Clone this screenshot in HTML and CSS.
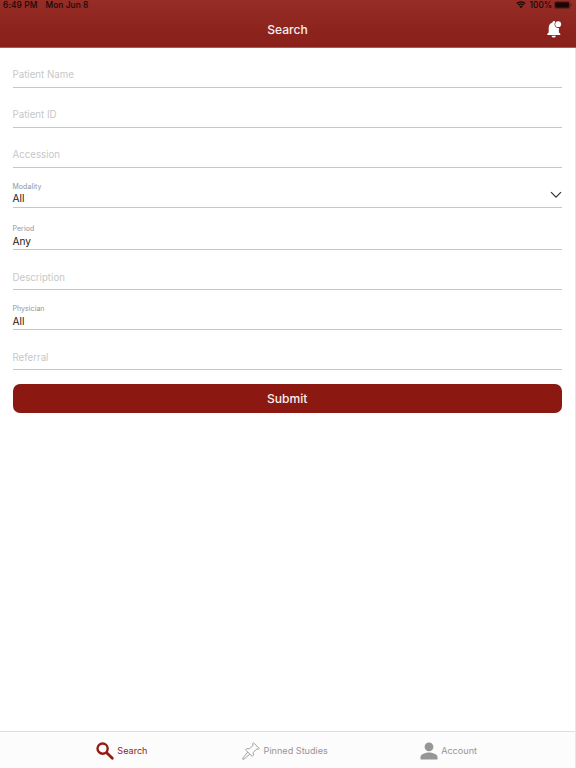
FILE: index.html
```html
<!DOCTYPE html>
<html lang="en">
<head>
<meta charset="utf-8">
<title>Search</title>
<link rel="stylesheet" href="styles.css">
</head>
<body>
<div class="app">
  <header class="header">
    <div class="status">
      <span class="time">6:49 PM</span>
      <span class="date">Mon Jun 8</span>
      <svg class="wifi" viewBox="0 0 20 15"><path d="M1.5 5.2a12 12 0 0 1 17 0M4.7 8.6a7.5 7.5 0 0 1 10.6 0" fill="none" stroke="currentColor" stroke-width="2.7"/><path d="M10 14.5 6.8 11.2a4.5 4.5 0 0 1 6.4 0z" fill="currentColor"/></svg>
      <span class="percent">100%</span>
      <svg class="battery" viewBox="0 0 18 8"><rect x=".3" y=".5" width="15.6" height="7" rx="1.7" fill="none" stroke="currentColor" stroke-width=".6" opacity=".5"/><rect x="1.1" y="1.2" width="14" height="5.6" rx="1" fill="currentColor"/><path d="M16.7 2.8q1 .3 1 1.2t-1 1.2z" fill="currentColor" opacity=".6"/></svg>
    </div>
    <div class="titlebar">
      <h1>Search</h1>
      <svg class="bell" viewBox="0 0 16 18"><path d="M1.3 14v-1.2l1.4-1.3V7.2C2.7 4 4.3 2.2 6.5 1.6V1q.5-1 1.5-1t1.3 1a3.7 3.7 0 0 0 3.6 6v4.5l1.4 1.3V14z" fill="#fff"/><circle cx="12.2" cy="3.2" r="2.9" fill="#fff"/><path d="M5.5 14.7h4.4q-.3 1.9-2.2 1.9t-2.2-1.9z" fill="#fff"/></svg>
    </div>
  </header>

  <main class="form">
    <div class="field"><span class="placeholder">Patient Name</span></div>
    <div class="field"><span class="placeholder">Patient ID</span></div>
    <div class="field"><span class="placeholder">Accession</span></div>
    <div class="field">
      <span class="label">Modality</span>
      <div class="row"><span class="value">All</span><svg class="chevron" viewBox="0 0 12 8"><path d="m1 1.2 5 5 5-5" fill="none" stroke="currentColor" stroke-width="1.2"/></svg></div>
    </div>
    <div class="field tall"><span class="label">Period</span><span class="value">Any</span></div>
    <div class="field"><span class="placeholder">Description</span></div>
    <div class="field"><span class="label">Physician</span><span class="value">All</span></div>
    <div class="field"><span class="placeholder">Referral</span></div>
    <button class="submit">Submit</button>
  </main>

  <nav class="tabs">
    <a class="tab search"><svg class="icon" viewBox="0 0 18 18"><circle cx="6.6" cy="6.6" r="5.1" fill="none" stroke="currentColor" stroke-width="2.4"/><path d="m10.7 10.7 5.6 5.5" stroke="currentColor" stroke-width="2.8" stroke-linecap="round"/></svg><span>Search</span></a>
    <a class="tab pinned"><svg class="icon" viewBox="0 0 18 18"><path d="m11.5.8 5.7 5.6-.9.9-1.6-.3-3.4 3.5.1 2.7-1.2 1.2-6.6-6.5 1.2-1.3 2.8.1 3.5-3.4-.4-1.6zM5.8 10 1 15.9l-.3 1.4 1.4-.3 5.7-4.8" fill="none" stroke="currentColor" stroke-width=".9" stroke-linejoin="round"/></svg><span>Pinned Studies</span></a>
    <a class="tab account"><svg class="icon" viewBox="0 0 18 18"><circle cx="9" cy="4.8" r="4.4" fill="currentColor"/><path d="M.5 17.5v-2.3c0-3 5.5-4.6 8.5-4.6s8.5 1.6 8.5 4.6v2.3z" fill="currentColor"/></svg><span>Account</span></a>
  </nav>
</div>
</body>
</html>
```
FILE: styles.css
```css
* { box-sizing: border-box; }
body {
  margin: 0;
  background: #fff;
  font-family: Inter, "Liberation Sans", sans-serif;
}
.app {
  display: flex;
  flex-direction: column;
  width: 576px;
  height: 768px;
  border-right: 1px solid #e5e5e5;
}
.header {
  height: 48px;
  margin-right: -1px;
  background: linear-gradient(#962d27, #8b231c 70%, #8a211b);
  border-bottom: 1px solid #a95a55;
}
.status {
  display: flex;
  align-items: center;
  height: 10px;
  padding: 0 4px 0 3px;
  color: #180706;
  font-size: 8.4px;
  font-weight: 500;
  line-height: 10px;
  white-space: nowrap;
}
.time { width: 42.5px; letter-spacing: .1px; }
.date { letter-spacing: .05px; }
.wifi { width: 10px; height: 7.5px; margin-left: auto; }
.percent { width: 22.5px; margin: 0 2px 0 3.5px; }
.battery { width: 18px; height: 8px; }
.titlebar {
  display: grid;
  grid-template-columns: 1fr auto 1fr;
  align-items: center;
  height: 38px;
  padding: 1px 14px 0 13px;
}
h1 {
  grid-column: 2;
  margin: 0;
  color: #f8eeed;
  font-size: 12.1px;
  font-weight: 500;
  line-height: 18px;
}
.bell { width: 16px; height: 18px; justify-self: end; }
.form {
  display: flex;
  flex: 1;
  flex-direction: column;
  padding: 0 13px 0 12.5px;
}
.field {
  display: flex;
  flex-direction: column;
  justify-content: flex-end;
  height: 40px;
  border-bottom: 1px solid #c6c6c6;
}
.field.tall { height: 42px; }
.placeholder {
  padding-bottom: 5px;
  color: #c7c7c8;
  font-size: 9.7px;
  line-height: 14px;
}
.tall ~ .field .placeholder { padding-bottom: 4.5px; }
.label {
  color: #949494;
  font-size: 7px;
  line-height: 9px;
  letter-spacing: .05px;
}
.value {
  padding-bottom: 1px;
  color: #161616;
  font-size: 10.1px;
  line-height: 15px;
}
.tall .value,
.tall ~ .field .value {
  padding-bottom: 0;
}
.tall .label,
.tall ~ .field .label {
  line-height: 10px;
}
.row { display: flex; justify-content: space-between; }
.chevron { width: 12px; height: 8px; color: #333; }
.submit {
  height: 28.5px;
  margin: 14.3px 0 0;
  padding: 0;
  border: 0;
  border-radius: 7px;
  background: #8b1911;
  color: #f9eeee;
  font: 500 12.1px/29px Inter, "Liberation Sans", sans-serif;
}
.tabs {
  display: grid;
  grid-template-columns: repeat(3, 1fr);
  height: 37px;
  padding: 1px 45px 0 40px;
  background: #fcfcfc;
  border-top: 1px solid #dedede;
}
.tab {
  display: flex;
  align-items: center;
  justify-content: center;
  gap: 3.5px;
  color: #969696;
  font-size: 9.1px;
  line-height: 14px;
  white-space: nowrap;
}
.tab span { padding-top: 1px; }
.icon { width: 18px; height: 18px; }
.search { color: #931b13; }
```
